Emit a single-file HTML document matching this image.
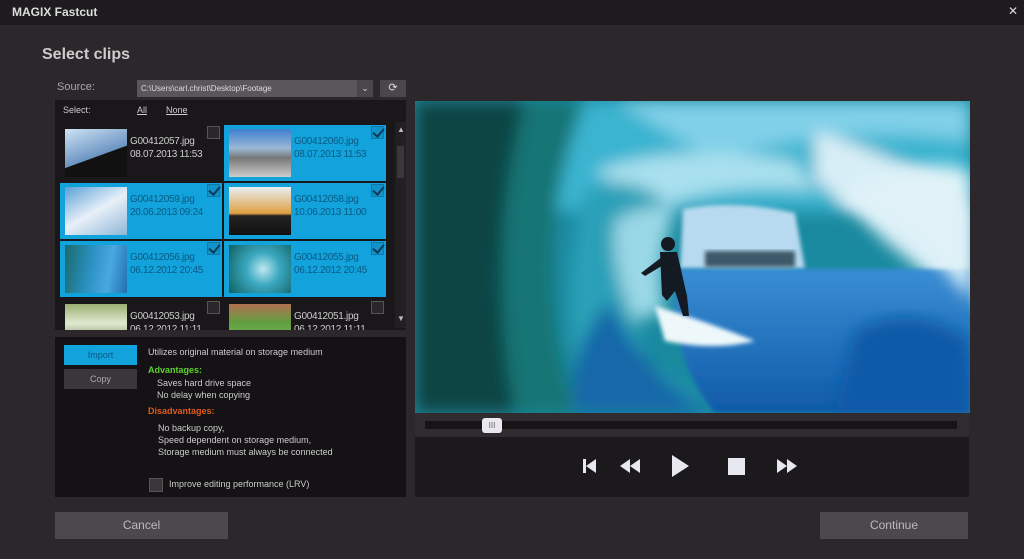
<!DOCTYPE html>
<html><head><meta charset="utf-8"><style>
*{margin:0;padding:0;box-sizing:border-box}
body{width:1024px;height:559px;background:#2b272b;font-family:"Liberation Sans",sans-serif;color:#ddd;position:relative;overflow:hidden}
.a{position:absolute}
.tile{position:absolute;width:162px;height:56px}
.sel{background:#12a2dc}
.tile .th{position:absolute;left:5px;top:4px;width:62px;height:48px}
.tile .tx{position:absolute;left:70px;top:10px;font-size:10px;line-height:13px;letter-spacing:-0.3px}
.sel .tx{color:#0a5a82}
.tile .cb{position:absolute;right:2px;top:1px;width:13px;height:13px;border:1px solid #555;background:#2a272a}
.sel .cb{border:1px solid #1278a8;background:#1292c8}
.sel .cb:after{content:"";position:absolute;left:3px;top:-1px;width:5px;height:9px;border:solid #0b3c5a;border-width:0 2px 2px 0;transform:rotate(40deg)}
.t{font-size:9px;color:#ccc}
</style></head><body>
<div class="a" style="left:0;top:0;width:1024px;height:25px;background:#1e1b1e"></div>
<div class="a" style="left:12px;top:5px;font-size:12px;font-weight:bold;color:#ddd">MAGIX Fastcut</div>
<div class="a" style="left:1008px;top:4px;font-size:12px;color:#ddd">✕</div>
<div class="a" style="left:42px;top:46px;font-size:16px;font-weight:bold;color:#ccc">Select clips</div>
<div class="a" style="left:57px;top:81px;font-size:11px;color:#aaa">Source:</div>
<div class="a" style="left:137px;top:80px;width:220px;height:17px;background:#5a565a;font-size:8px;color:#ddd;padding:4px 4px">C:\Users\carl.christ\Desktop\Footage</div>
<div class="a" style="left:357px;top:80px;width:16px;height:17px;background:#4a464a;color:#ddd;font-size:9px;text-align:center;line-height:17px">⌄</div>
<div class="a" style="left:380px;top:80px;width:26px;height:17px;background:#4a464a;color:#ddd;font-size:11px;text-align:center;line-height:17px">⟳</div>
<div class="a" style="left:55px;top:100px;width:351px;height:230px;background:#1a171a"></div>
<div class="a" style="left:63px;top:105px;font-size:9px;color:#ccc">Select:</div>
<div class="a" style="left:137px;top:105px;font-size:9px;color:#ccc;text-decoration:underline">All</div>
<div class="a" style="left:166px;top:105px;font-size:9px;color:#ccc;text-decoration:underline">None</div>
<div class="a" style="left:58px;top:122px;width:335px;height:208px;overflow:hidden">
<div class="tile" style="left:2px;top:3px"><div class="th" style="background:linear-gradient(160deg,#cfe3f5,#6b94c2 55%,#111 56%)"></div><div class="tx" style="color:#ccc">G00412057.jpg<br>08.07.2013 11:53</div><div class="cb"></div></div>
<div class="tile sel" style="left:166px;top:3px"><div class="th" style="background:linear-gradient(180deg,#3e80d0,#9ab8d6 40%,#777 60%,#ccc)"></div><div class="tx">G00412060.jpg<br>08.07.2013 11:53</div><div class="cb"></div></div>
<div class="tile sel" style="left:2px;top:61px"><div class="th" style="background:linear-gradient(150deg,#5aa0d8,#e8f0f8 50%,#8fb6d8)"></div><div class="tx">G00412059.jpg<br>20.06.2013 09:24</div><div class="cb"></div></div>
<div class="tile sel" style="left:166px;top:61px"><div class="th" style="background:linear-gradient(180deg,#e8eef4,#e0a040 55%,#222 60%,#111)"></div><div class="tx">G00412058.jpg<br>10.06.2013 11:00</div><div class="cb"></div></div>
<div class="tile sel" style="left:2px;top:119px"><div class="th" style="background:linear-gradient(100deg,#1a6a6a,#2a90c0 40%,#4aa8e0 70%,#2070b0)"></div><div class="tx">G00412056.jpg<br>06.12.2012 20:45</div><div class="cb"></div></div>
<div class="tile sel" style="left:166px;top:119px"><div class="th" style="background:radial-gradient(circle at 55% 50%,#bfe8f0,#3aa8c0 40%,#106060)"></div><div class="tx">G00412055.jpg<br>06.12.2012 20:45</div><div class="cb"></div></div>
<div class="tile" style="left:2px;top:178px"><div class="th" style="background:linear-gradient(180deg,#9bb070,#dfe8d0 40%,#556633)"></div><div class="tx" style="color:#ccc">G00412053.jpg<br>06.12.2012 11:11</div><div class="cb"></div></div>
<div class="tile" style="left:166px;top:178px"><div class="th" style="background:linear-gradient(180deg,#b07050,#60a040 40%,#8cc070)"></div><div class="tx" style="color:#ccc">G00412051.jpg<br>06.12.2012 11:11</div><div class="cb"></div></div>
</div>
<div class="a" style="left:395px;top:122px;width:11px;height:206px;background:#221f22"></div>
<div class="a" style="left:397px;top:125px;font-size:8px;color:#bbb">▲</div>
<div class="a" style="left:397px;top:146px;width:7px;height:32px;background:#3a363a"></div>
<div class="a" style="left:397px;top:314px;font-size:8px;color:#bbb">▼</div>
<div class="a" style="left:55px;top:337px;width:351px;height:160px;background:#141214"></div>
<div class="a" style="left:64px;top:345px;width:73px;height:20px;background:#12a2dc;color:#0a5a82;font-size:9px;text-align:center;line-height:20px">Import</div>
<div class="a" style="left:64px;top:369px;width:73px;height:20px;background:#3a363a;color:#aaa;font-size:9px;text-align:center;line-height:20px">Copy</div>
<div class="a t" style="left:148px;top:347px">Utilizes original material on storage medium</div>
<div class="a t" style="left:148px;top:365px;color:#5ed030;font-weight:bold">Advantages:</div>
<div class="a t" style="left:157px;top:377px;line-height:12px">Saves hard drive space<br>No delay when copying</div>
<div class="a t" style="left:148px;top:406px;color:#e05a20;font-weight:bold">Disadvantages:</div>
<div class="a t" style="left:158px;top:422px;line-height:12px">No backup copy,<br>Speed dependent on storage medium,<br>Storage medium must always be connected</div>
<div class="a" style="left:149px;top:478px;width:14px;height:14px;background:#3a363a;border:1px solid #555"></div>
<div class="a t" style="left:169px;top:479px">Improve editing performance (LRV)</div>
<svg class="a" style="left:415px;top:101px" width="555" height="312" viewBox="0 0 555 312">
<defs><filter id="b"><feGaussianBlur stdDeviation="8"/></filter><filter id="s"><feGaussianBlur stdDeviation="2"/></filter>
<linearGradient id="sea" x1="0" y1="0" x2="0" y2="1"><stop offset="0" stop-color="#3a8ed4"/><stop offset="1" stop-color="#0f5aa8"/></linearGradient></defs>
<rect width="555" height="312" fill="#1a8aa0"/>
<g filter="url(#b)">
<rect x="0" y="0" width="555" height="110" fill="#3ab4d0"/>
<path d="M200 0 H555 V40 Q420 20 300 60 Z" fill="#80d0e8"/>
<path d="M400 30 Q500 60 555 110 V210 Q520 180 470 140 Q430 100 400 80 Z" fill="#d8eef6"/>
<path d="M180 70 Q260 40 380 60 L400 90 Q300 80 240 110 Z" fill="#a8e0ee"/>
<path d="M0 0 H110 Q70 150 100 312 H0 Z" fill="#0b4444"/>
<path d="M110 0 H170 Q110 150 160 312 H100 Q70 150 110 0 Z" fill="#147474"/>
<path d="M170 90 Q210 70 250 100 Q200 160 230 260 L300 312 H170 Q140 200 170 90 Z" fill="#2ba0b8"/>
<path d="M195 200 Q230 280 300 312 H160 Q150 250 195 200 Z" fill="#1668a8"/>
<path d="M200 120 Q230 100 260 110 Q240 160 250 210 L220 220 Q195 170 200 120 Z" fill="#9ad8e6"/>
</g>
<path d="M268 108 Q320 98 380 112 L390 168 H265 Z" fill="#b8daf0" filter="url(#s)"/>
<path d="M262 168 H555 V312 H300 Q250 250 262 168 Z" fill="url(#sea)" filter="url(#s)"/>
<rect x="290" y="150" width="90" height="16" fill="#3c5868" filter="url(#s)"/>
<path d="M420 100 Q500 120 555 200 V70 Q490 50 420 100 Z" fill="#e0f2f8" filter="url(#b)"/>
<path d="M240 205 Q290 220 340 240 Q300 250 250 240 Z" fill="#eef8fa" filter="url(#s)"/>
<path d="M440 230 Q500 200 555 240 V312 H420 Z" fill="#0f5aa8" filter="url(#b)"/>
<g fill="#141a22"><circle cx="253" cy="143" r="7"/><path d="M245 151 L262 151 L272 195 L274 215 L268 215 L260 190 L252 200 L247 194 Z"/><path d="M247 156 L226 172 L230 175 L250 163Z"/></g>
</svg>
<div class="a" style="left:415px;top:413px;width:554px;height:24px;background:#2f2b2f"></div>
<div class="a" style="left:425px;top:421px;width:532px;height:8px;background:#171417"></div>
<div class="a" style="left:482px;top:418px;width:20px;height:15px;background:#e8e8ee;border-radius:3px;font-size:8px;color:#666;text-align:center;line-height:15px">III</div>
<div class="a" style="left:415px;top:437px;width:554px;height:60px;background:#1c191c"></div>
<svg class="a" style="left:575px;top:452px" width="230" height="28" viewBox="0 0 230 28" fill="#e8e8f0">
<rect x="8" y="7" width="3" height="14"/><path d="M11 14 L21 7 V21Z"/>
<path d="M45 14 L55 7 V21Z M55 14 L65 7 V21Z"/>
<path d="M97 3 L114 14 L97 25Z"/>
<rect x="153" y="6" width="17" height="17"/>
<path d="M202 7 L212 14 L202 21Z M212 7 L222 14 L212 21Z"/>
</svg>
<div class="a" style="left:55px;top:512px;width:173px;height:27px;background:#4c484c;color:#bbb;font-size:12px;text-align:center;line-height:27px">Cancel</div>
<div class="a" style="left:820px;top:512px;width:148px;height:27px;background:#4c484c;color:#bbb;font-size:12px;text-align:center;line-height:27px">Continue</div>
</body></html>
